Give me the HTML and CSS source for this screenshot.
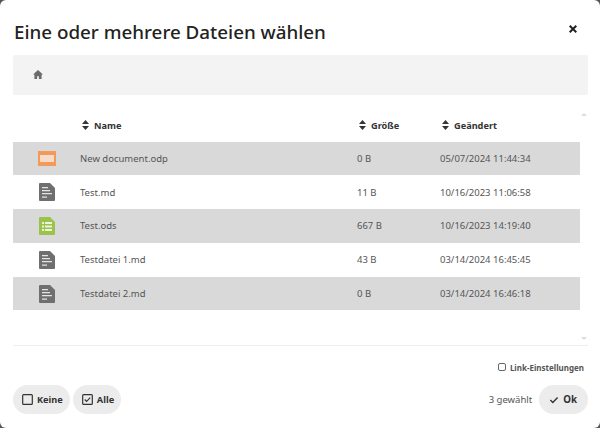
FILE: index.html
```html
<!DOCTYPE html>
<html lang="de">
<head>
  <meta charset="UTF-8">
  <title>Eine oder mehrere Dateien wählen</title>
  <link rel="stylesheet" href="styles.css">
</head>
<body>
  <svg class="defs" width="0" height="0">
    <symbol id="sort" viewBox="0 0 7 10">
      <path d="M3.500 0 7 4H0zM3.500 10 0 6h7z"/>
    </symbol>
    <symbol id="doc" viewBox="0 0 16 18">
      <path fill="#6f6f6f" d="M1 0h10l5 5v12a1 1 0 0 1-1 1H1a1 1 0 0 1-1-1V1a1 1 0 0 1 1-1z"/>
      <path fill="#e4e4e4" d="M3 4h6v1.300H3zM3 7h8v1.300H3zM3 10h10v1.300H3zM3 13.500h5v1.300H3z"/>
    </symbol>
  </svg>

  <div class="dialog">
    <header class="head">
      <h1>Eine oder mehrere Dateien wählen</h1>
      <button class="close" aria-label="Schließen">
        <svg width="8" height="8" viewBox="0 0 8 8"><path d="M.7.7l6.600 6.600M7.300.7 .7 7.300"/></svg>
      </button>
    </header>

    <nav class="crumbs">
      <svg class="home" width="10" height="9" viewBox="0 0 11 10"><path d="M5.500 0 11 5H9.500v5H6.500V7h-2v3h-3V5H0z"/></svg>
    </nav>

    <div class="listing">
      <div class="files">
        <div class="row heading">
          <span></span>
          <span class="col"><svg class="sort"><use href="#sort"/></svg>Name</span>
          <span class="col"><svg class="sort"><use href="#sort"/></svg>Größe</span>
          <span class="col"><svg class="sort"><use href="#sort"/></svg>Geändert</span>
        </div>

        <div class="row picked">
          <span class="icon">
            <svg width="18" height="15" viewBox="0 0 18 15"><path fill="#f39a5b" d="M0 0h18v15H0z"/><path fill="#f5dcc8" d="M2 4h14v7H2z"/></svg>
          </span>
          <span>New document.odp</span><span>0 B</span><span>05/07/2024 11:44:34</span>
        </div>
        <div class="row">
          <span class="icon"><svg width="16" height="18"><use href="#doc"/></svg></span>
          <span>Test.md</span><span>11 B</span><span>10/16/2023 11:06:58</span>
        </div>
        <div class="row picked">
          <span class="icon">
            <svg width="16" height="18" viewBox="0 0 16 18">
              <path fill="#9bc34b" d="M1 0h10l5 5v12a1 1 0 0 1-1 1H1a1 1 0 0 1-1-1V1a1 1 0 0 1 1-1z"/>
              <path fill="#eef4dc" d="M3 5h2v2H3zM6 5h7v2H6zM3 8.500h2v2H3zM6 8.500h7v2H6zM3 12h2v2H3zM6 12h7v2H6z"/>
            </svg>
          </span>
          <span>Test.ods</span><span>667 B</span><span>10/16/2023 14:19:40</span>
        </div>
        <div class="row">
          <span class="icon"><svg width="16" height="18"><use href="#doc"/></svg></span>
          <span>Testdatei 1.md</span><span>43 B</span><span>03/14/2024 16:45:45</span>
        </div>
        <div class="row picked">
          <span class="icon"><svg width="16" height="18"><use href="#doc"/></svg></span>
          <span>Testdatei 2.md</span><span>0 B</span><span>03/14/2024 16:46:18</span>
        </div>
      </div>

      <div class="scroller">
        <svg width="6" height="3" viewBox="0 0 6 3"><path d="M3 0l3 3H0z"/></svg>
        <svg width="6" height="3" viewBox="0 0 6 3"><path d="M3 3 0 0h6z"/></svg>
      </div>
    </div>

    <label class="link-opts"><span class="tick"></span>Link-Einstellungen</label>

    <footer class="foot">
      <div class="group">
        <button class="pill">
          <svg width="11" height="11" viewBox="0 0 12 12"><rect x=".75" y=".75" width="10.500" height="10.500" rx="1"/></svg>
          Keine
        </button>
        <button class="pill">
          <svg width="11" height="11" viewBox="0 0 12 12"><rect x=".75" y=".75" width="10.500" height="10.500" rx="1"/><path d="M3 6l2 2 4-4"/></svg>
          Alle
        </button>
      </div>
      <div class="group">
        <span class="count">3 gewählt</span>
        <button class="pill ok">
          <svg width="10" height="8" viewBox="0 0 12 10"><path d="M1.500 5l3 3 6-6"/></svg>
          Ok
        </button>
      </div>
    </footer>
  </div>
</body>
</html>
```

FILE: styles.css
```css
html, body {
  margin: 0;
  height: 100%;
}
body {
  background: #555;
  font-family: "Noto Sans", "Open Sans", sans-serif;
  color: #333;
  overflow: hidden;
}
.defs {
  display: block;
  height: 0;
}
.dialog {
  box-sizing: border-box;
  height: 428px;
  padding: 17px 12px 13px 13px;
  background: white;
  border-radius: 6px;
  display: flex;
  flex-direction: column;
}
.head {
  display: flex;
  justify-content: space-between;
  align-items: flex-start;
  height: 38px;
}
h1 {
  margin: 0 0 0 1px;
  font-size: 18.800px;
  line-height: 30px;
  font-weight: 500;
  color: #222;
}
.close {
  border: none;
  background: none;
  padding: 0;
  margin: 8px 11px 0 0;
  line-height: 0;
}
.close path {
  stroke: #222;
  stroke-width: 2;
  fill: none;
}
.crumbs {
  height: 40px;
  background: #f3f3f3;
  border-radius: 2px;
  display: flex;
  align-items: center;
  padding: 0 0 1px 20px;
  box-sizing: border-box;
}
.home path {
  fill: #6a6a6a;
}
.listing {
  display: flex;
  height: 250px;
  border-bottom: 1px solid #eee;
}
.files {
  width: 567px;
  padding-top: 14px;
}
.row {
  display: grid;
  grid-template-columns: 67px 277px 83px 1fr;
  align-items: center;
  height: 33.800px;
  font-size: 9.500px;
  color: #555;
}
.heading {
  height: 32.500px;
  font-size: 9.200px;
  font-weight: 700;
  color: #333;
}
.picked {
  background: #d9d9d9;
}
.icon {
  display: flex;
  justify-content: center;
  line-height: 0;
}
.col {
  display: flex;
  align-items: center;
  gap: 5px;
  padding-left: 2px;
}
.sort {
  width: 7px;
  height: 10px;
  fill: #333;
}
.scroller {
  flex: 1;
  display: flex;
  flex-direction: column;
  justify-content: space-between;
  align-items: center;
  padding: 18px 0 5px;
}
.scroller path {
  fill: #ddd;
}
.link-opts {
  display: flex;
  justify-content: flex-end;
  align-items: center;
  gap: 4px;
  margin: 14px 4px 0 0;
  height: 14px;
  font-size: 8px;
  font-weight: 700;
  color: #555;
}
.tick {
  box-sizing: border-box;
  width: 8px;
  height: 8px;
  border: 1px solid #666;
  border-radius: 2px;
}
.foot {
  display: flex;
  justify-content: space-between;
  align-items: center;
  margin-top: 11px;
}
.group {
  display: flex;
  align-items: center;
  gap: 3px;
}
.pill {
  display: flex;
  align-items: center;
  gap: 4px;
  height: 29px;
  padding: 0 7px 0 9px;
  border: none;
  border-radius: 15px;
  background: #ececec;
  font: 700 9.200px "Noto Sans", "Open Sans", sans-serif;
  color: #333;
}
.pill rect, .pill path {
  fill: none;
  stroke: #333;
  stroke-width: 1.300;
}
.ok {
  padding: 0 11px 0 10px;
  font-size: 9.800px;
}
.ok path {
  stroke-width: 1.800;
}
.count {
  font-size: 9.500px;
  color: #555;
  margin-right: 4px;
}
```
